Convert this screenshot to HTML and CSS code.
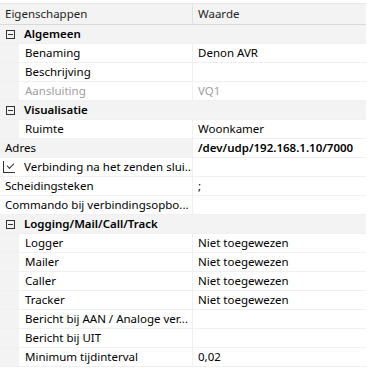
FILE: index.html
```html
<!DOCTYPE html>
<html lang="nl">
<head>
  <meta charset="UTF-8" />
  <title>Eigenschappen</title>
  <link rel="stylesheet" href="styles.css">
</head>
<body>
  <div class="grid">
    <div class="head">
      <div class="name">Eigenschappen</div>
      <div class="val">Waarde</div>
    </div>

    <div class="cat"><span class="toggle"></span>Algemeen</div>
    <div class="row sub"><div class="name">Benaming</div><div class="val">Denon AVR</div></div>
    <div class="row sub"><div class="name">Beschrijving</div><div class="val"></div></div>
    <div class="row sub off"><div class="name">Aansluiting</div><div class="val">VQ1</div></div>

    <div class="cat"><span class="toggle"></span>Visualisatie</div>
    <div class="row sub"><div class="name">Ruimte</div><div class="val">Woonkamer</div></div>

    <div class="row sel"><div class="name">Adres</div><div class="val strong">/dev/udp/192.168.1.10/7000</div></div>
    <div class="row"><div class="name"><span class="check"></span>Verbinding na het zenden slui...</div><div class="val"></div></div>
    <div class="row"><div class="name">Scheidingsteken</div><div class="val">;</div></div>
    <div class="row"><div class="name">Commando bij verbindingsopbo...</div><div class="val"></div></div>

    <div class="cat"><span class="toggle"></span>Logging/Mail/Call/Track</div>
    <div class="row sub"><div class="name">Logger</div><div class="val">Niet toegewezen</div></div>
    <div class="row sub"><div class="name">Mailer</div><div class="val">Niet toegewezen</div></div>
    <div class="row sub"><div class="name">Caller</div><div class="val">Niet toegewezen</div></div>
    <div class="row sub"><div class="name">Tracker</div><div class="val">Niet toegewezen</div></div>
    <div class="row sub"><div class="name">Bericht bij AAN / Analoge ver...</div><div class="val"></div></div>
    <div class="row sub"><div class="name">Bericht bij UIT</div><div class="val"></div></div>
    <div class="row sub"><div class="name">Minimum tijdinterval</div><div class="val">0,02</div></div>
  </div>
</body>
</html>
```

FILE: styles.css
```css
:root {
  --bg-grey: #f3f3f3;
  --line: #f0f0f0;
  --font-main: 'Noto Sans', sans-serif;
}

body {
  margin: 0;
  background: #fff;
  font-family: var(--font-main);
  font-size: 11.5px;
  color: #000;
}

.grid {
  width: 366px;
  margin-top: 3px;
}

.head,
.row {
  display: grid;
  grid-template-columns: 193px 1fr;
  height: 18px;
  line-height: 18px;
  border-bottom: 1px solid var(--line);
}

.head {
  height: 20px;
  line-height: 20px;
  background: var(--bg-grey);
  border-top: 1px solid #e8e8e8;
  border-bottom: 1px solid #d9d9d9;
  color: #1e1e1e;
}

.name,
.val {
  white-space: nowrap;
  overflow: hidden;
}

.name {
  padding-left: 5px;
  border-right: 1px solid var(--line);
}

.head .name {
  border-right-color: #e2e2e2;
}

.val {
  padding-left: 5px;
}

.row.sub {
  grid-template-columns: 19px 174px 1fr;
}

.row.sub::before {
  content: '';
  background: var(--bg-grey);
}

.row.sub .name {
  padding-left: 6px;
}

.row.sel .name {
  background: var(--bg-grey);
}

.off {
  color: #a0a0a0;
}

.strong {
  font-weight: 600;
}

.cat {
  height: 18px;
  line-height: 18px;
  border-bottom: 1px solid var(--line);
  background: var(--bg-grey);
  font-weight: 600;
  display: flex;
  align-items: center;
}

.toggle {
  position: relative;
  width: 7px;
  height: 7px;
  border: 1px solid #333;
  margin: 0 9px 0 6px;
}

.toggle::after {
  content: '';
  position: absolute;
  left: 1px;
  top: 3px;
  width: 5px;
  height: 1px;
  background: #333;
}

.check {
  display: inline-block;
  vertical-align: -2px;
  position: relative;
  width: 11px;
  height: 11px;
  border-left: 1px solid #333;
  border-bottom: 1px solid #333;
  margin: 0 9px 0 -2px;
}

.check::after {
  content: '';
  position: absolute;
  left: 3px;
  top: 2px;
  width: 6px;
  height: 3px;
  border-left: 1px solid #333;
  border-bottom: 1px solid #333;
  transform: rotate(-45deg);
}
```
